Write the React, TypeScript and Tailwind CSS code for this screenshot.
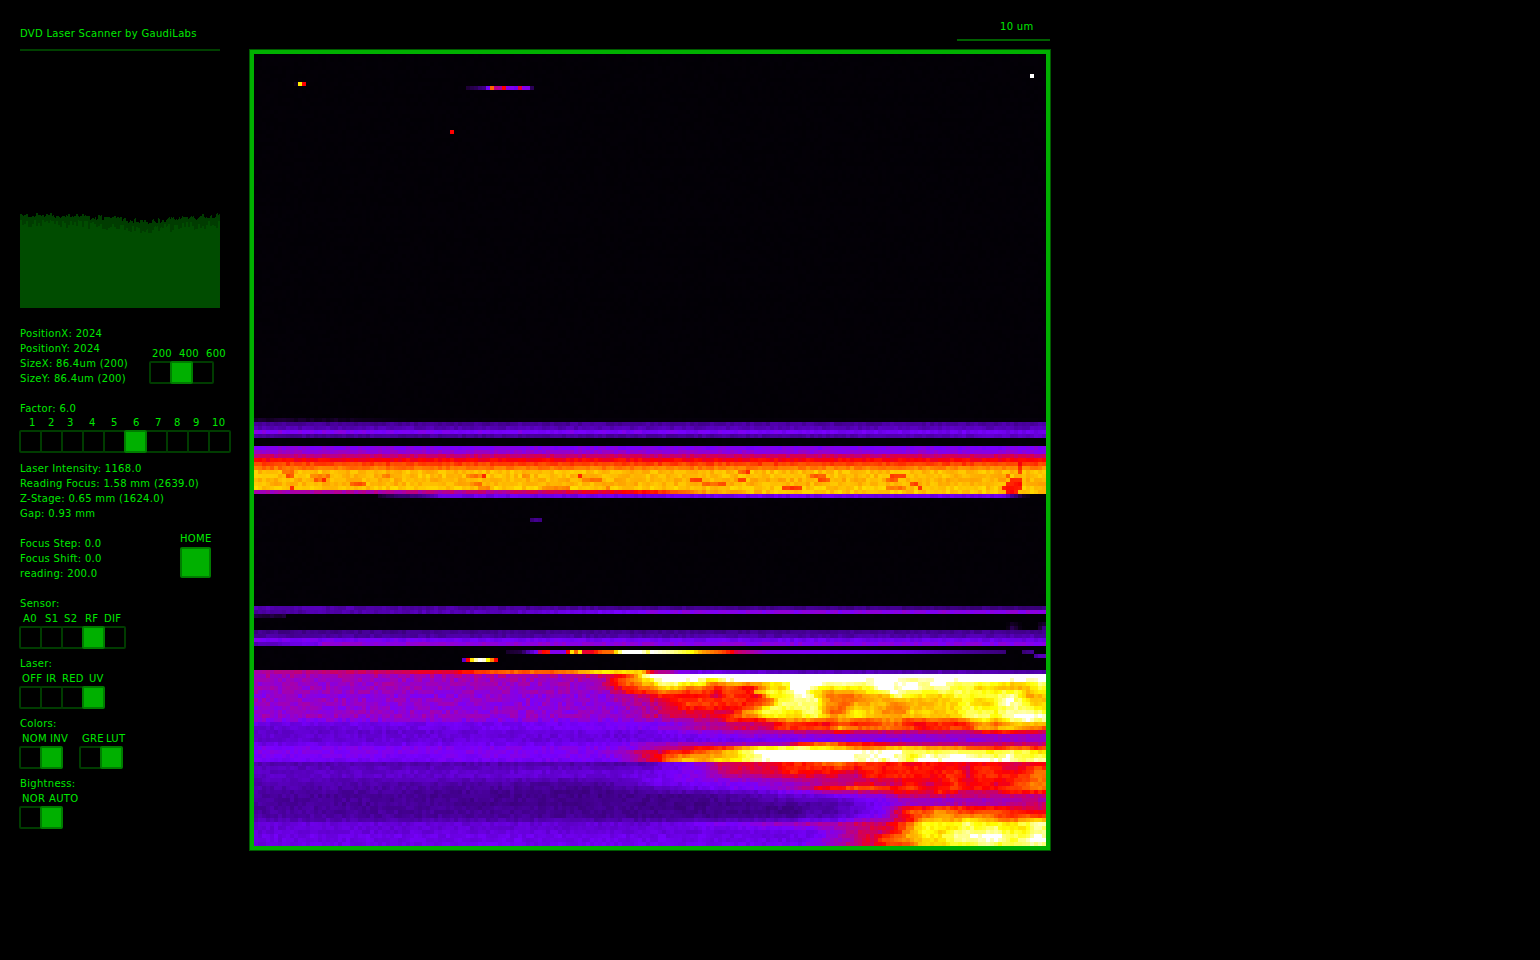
import { useEffect, useRef } from 'react';

// Fire-style LUT of the scanner, value 0..1 -> rgb.
const LUT: [number, number, number, number][] = [
  [0, 2, 0, 5],
  [0.1, 30, 0, 55],
  [0.25, 70, 0, 150],
  [0.4, 120, 0, 255],
  [0.5, 170, 0, 165],
  [0.62, 255, 0, 0],
  [0.75, 255, 130, 0],
  [0.88, 255, 255, 0],
  [1, 255, 255, 255],
];

type Stops = [number, number][];

// Scan rows: image y -> brightness stops along image x. Rows between keys are blended.
const KEYS: [number, Stops][] = [
  [54, [[254, 0.002]]],
  [414, [[254, 0.002]]],
  [418, [[254, 0.08], [350, 0.05], [400, 0.01]]],
  [422, [[254, 0.25], [1046, 0.27]]],
  [426, [[254, 0.28], [1046, 0.29]]],
  [430, [[254, 0.41], [800, 0.38], [1046, 0.36]]],
  [434, [[254, 0.25], [800, 0.27], [1046, 0.33]]],
  [438, [[254, 0.002]]],
  [442, [[254, 0.002]]],
  [446, [[254, 0.42], [1046, 0.41]]],
  [450, [[254, 0.46], [1046, 0.44]]],
  [454, [[254, 0.54], [1046, 0.55]]],
  [458, [[254, 0.62]]],
  [462, [[254, 0.68]]],
  [466, [[254, 0.74], [1046, 0.76]]],
  [470, [[254, 0.81]]],
  [474, [[254, 0.81]]],
  [478, [[254, 0.8]]],
  [482, [[254, 0.81]]],
  [486, [[254, 0.82]]],
  [490, [[254, 0.48], [500, 0.52], [640, 0.62], [700, 0.78], [780, 0.82]]],
  [494, [[254, 0.002], [376, 0.002], [380, 0.12], [420, 0.25], [440, 0.36], [1000, 0.36], [1020, 0.1], [1030, 0.002]]],
  [498, [[254, 0.002]]],
  [602, [[254, 0.002]]],
  [606, [[254, 0.3], [650, 0.25], [1046, 0.22]]],
  [610, [[254, 0.26], [500, 0.3], [600, 0.38], [660, 0.42], [1046, 0.43]]],
  [614, [[254, 0.12], [285, 0.1], [286, 0.002]]],
  [618, [[254, 0.002]]],
  [626, [[254, 0.002], [1005, 0.002], [1010, 0.14], [1020, 0.002], [1036, 0.002], [1040, 0.2]]],
  [630, [[254, 0.24], [1046, 0.25]]],
  [634, [[254, 0.26], [1046, 0.28]]],
  [638, [[254, 0.41], [1046, 0.37]]],
  [642, [[254, 0.3], [315, 0.38], [320, 0.45], [1046, 0.42]]],
  [646, [[254, 0.002]]],
  [666, [[254, 0.002]]],
  [670, [[254, 0.5], [450, 0.58], [490, 0.7], [560, 0.72], [600, 0.85], [640, 0.85], [652, 0.55], [690, 0.38], [800, 0.3], [1046, 0.27]]],
  [674, [[254, 0.45], [560, 0.46], [610, 0.55], [630, 0.68], [645, 0.96], [660, 1], [1046, 1]]],
  [678, [[254, 0.44], [590, 0.45], [620, 0.62], [640, 0.8], [650, 0.92], [665, 1], [690, 1], [700, 0.9], [720, 0.98], [1046, 1]]],
  [684, [[254, 0.44], [590, 0.44], [618, 0.6], [635, 0.68], [650, 0.72], [665, 0.9], [690, 0.85], [700, 0.72], [720, 0.66], [760, 0.66], [775, 0.78], [790, 0.9], [800, 1], [830, 0.92], [880, 0.9], [895, 1], [915, 0.95], [960, 0.88], [990, 0.78], [1020, 0.8], [1046, 0.88]]],
  [692, [[254, 0.43], [600, 0.43], [625, 0.54], [650, 0.6], [690, 0.64], [760, 0.63], [770, 0.86], [810, 0.98], [830, 0.86], [850, 0.74], [880, 0.86], [900, 0.95], [950, 0.86], [980, 0.9], [1000, 0.92], [1020, 0.74], [1046, 0.88]]],
  [700, [[254, 0.44], [600, 0.42], [625, 0.5], [650, 0.56], [700, 0.62], [755, 0.68], [765, 0.9], [810, 0.98], [830, 0.72], [850, 0.76], [900, 0.82], [960, 0.82], [990, 0.96], [1020, 0.88], [1046, 0.85]]],
  [708, [[254, 0.43], [600, 0.42], [650, 0.52], [700, 0.62], [740, 0.62], [760, 0.88], [800, 0.96], [830, 0.68], [850, 0.82], [900, 0.78], [950, 0.88], [1000, 0.9], [1046, 0.92]]],
  [716, [[254, 0.44], [600, 0.42], [650, 0.5], [720, 0.6], [770, 0.85], [830, 0.85], [900, 0.8], [1000, 0.92], [1046, 1]]],
  [720, [[254, 0.36], [650, 0.4], [720, 0.45], [770, 0.62], [830, 0.65], [900, 0.62], [960, 0.66], [990, 0.76], [1046, 0.96]]],
  [724, [[254, 0.34], [650, 0.38], [700, 0.48], [770, 0.6], [830, 0.66], [1000, 0.7], [1046, 0.72]]],
  [727, [[254, 0.33], [650, 0.42], [760, 0.6], [820, 0.72], [830, 0.82], [850, 0.7], [950, 0.65], [1000, 0.85], [1046, 0.7]]],
  [732, [[254, 0.33], [650, 0.34], [750, 0.45], [1046, 0.47]]],
  [738, [[254, 0.33], [650, 0.36], [850, 0.42], [1000, 0.45], [1046, 0.48]]],
  [742, [[254, 0.37], [600, 0.39], [650, 0.48], [780, 0.5], [800, 0.62], [820, 0.72], [900, 0.55], [1046, 0.55]]],
  [746, [[254, 0.4], [620, 0.41], [650, 0.5], [700, 0.62], [750, 0.78], [770, 0.9], [810, 0.9], [850, 0.75], [900, 0.8], [950, 0.8], [1000, 0.7], [1046, 0.7]]],
  [750, [[254, 0.41], [600, 0.41], [625, 0.5], [650, 0.58], [700, 0.72], [750, 0.9], [770, 1], [900, 1], [920, 0.9], [950, 0.95], [1046, 0.9]]],
  [756, [[254, 0.4], [610, 0.41], [650, 0.62], [700, 0.85], [740, 0.9], [770, 1], [890, 1], [900, 0.85], [930, 1], [1000, 1], [1020, 0.93], [1046, 0.95]]],
  [760, [[254, 0.38], [600, 0.38], [650, 0.55], [680, 0.72], [720, 0.88], [790, 1], [890, 0.97], [930, 1], [1046, 1]]],
  [762, [[254, 0.29], [640, 0.28], [680, 0.38], [720, 0.55], [800, 0.62], [830, 0.72], [900, 0.62], [1046, 0.6]]],
  [772, [[254, 0.31], [650, 0.36], [720, 0.5], [800, 0.6], [900, 0.62], [1000, 0.65], [1046, 0.72]]],
  [780, [[254, 0.31], [600, 0.28], [650, 0.4], [720, 0.42], [800, 0.5], [900, 0.58], [1000, 0.65], [1046, 0.72]]],
  [786, [[254, 0.28], [600, 0.24], [650, 0.3], [780, 0.45], [850, 0.7], [950, 0.62], [1046, 0.7]]],
  [792, [[254, 0.27], [600, 0.23], [700, 0.25], [870, 0.45], [900, 0.6], [1000, 0.55], [1046, 0.55]]],
  [800, [[254, 0.26], [600, 0.23], [700, 0.23], [850, 0.3], [880, 0.42], [950, 0.42], [1046, 0.5]]],
  [808, [[254, 0.26], [600, 0.24], [800, 0.22], [880, 0.42], [900, 0.62], [960, 0.72], [1046, 0.65]]],
  [816, [[254, 0.28], [700, 0.25], [800, 0.26], [880, 0.45], [920, 0.72], [960, 0.8], [1046, 0.7]]],
  [822, [[254, 0.34], [650, 0.33], [880, 0.55], [920, 0.85], [960, 0.88], [1046, 0.9]]],
  [832, [[254, 0.36], [650, 0.36], [800, 0.35], [880, 0.62], [915, 0.82], [970, 0.95], [1046, 0.94]]],
  [842, [[254, 0.36], [650, 0.38], [800, 0.38], [880, 0.6], [920, 0.72], [960, 0.92], [1046, 0.96]]],
];

// Single-pixel scan lines, exact cells: y, first x, values.
const LINES: [number, number, number[]][] = [
  [82, 294, [0.05, 0.86, 0.62]],
  [86, 466, [0.1, 0.13, 0.15, 0.2, 0.22, 0.4, 0.72, 0.52, 0.5, 0.62, 0.42, 0.42, 0.38, 0.58, 0.42, 0.42, 0.15]],
  [130, 450, [0.62]],
  [74, 1030, [1]],
  [518, 530, [0.2, 0.24, 0.22]],
  [658, 462, [0.33, 0.62, 0.85, 0.96, 1, 0.98, 0.88, 0.75, 0.62]],
  [654, 1034, [0.26, 0.3, 0.3]],
  [650, 1022, [0.2, 0.22, 0.24]],
];

// Darker runs in the bright bands: x0, x1, y, value.
const SPOTS: [number, number, number, number][] = [
  [282, 294, 470, 0.73], [286, 294, 474, 0.71], [310, 330, 474, 0.75], [314, 326, 478, 0.72], [322, 326, 478, 0.66],
  [350, 366, 482, 0.72], [290, 294, 486, 0.66], [382, 390, 474, 0.75], [470, 480, 482, 0.75], [478, 490, 486, 0.74],
  [520, 530, 474, 0.75], [540, 560, 486, 0.75], [580, 590, 478, 0.75],
  [466, 482, 474, 0.74], [480, 486, 474, 0.66], [578, 582, 474, 0.68], [590, 600, 478, 0.72], [606, 610, 486, 0.74],
  [560, 570, 486, 0.74], [650, 662, 476, 0.69], [690, 700, 478, 0.67], [700, 726, 482, 0.72], [735, 745, 470, 0.72],
  [745, 750, 470, 0.66], [735, 746, 478, 0.7], [780, 790, 486, 0.7], [790, 800, 486, 0.66], [810, 826, 474, 0.7],
  [815, 830, 478, 0.7], [885, 895, 478, 0.72], [890, 905, 474, 0.68], [910, 918, 482, 0.7], [884, 905, 486, 0.74],
  [915, 922, 486, 0.66], [1004, 1010, 474, 0.72], [1008, 1020, 478, 0.65], [1005, 1020, 482, 0.65], [1002, 1020, 486, 0.65],
  [1005, 1018, 490, 0.63], [1016, 1020, 462, 0.63], [1016, 1020, 466, 0.66], [1016, 1020, 470, 0.66], [620, 650, 752, 0.56],
];

function rnd(a: number, b: number) {
  const s = Math.sin(a * 127.1 + b * 311.7) * 43758.5453;
  return s - Math.floor(s);
}

function smooth(x: number, y: number) {
  const xi = Math.floor(x);
  const yi = Math.floor(y);
  const fx = x - xi;
  const fy = y - yi;
  const top = rnd(xi, yi) * (1 - fx) + rnd(xi + 1, yi) * fx;
  const bot = rnd(xi, yi + 1) * (1 - fx) + rnd(xi + 1, yi + 1) * fx;
  return top * (1 - fy) + bot * fy;
}

function along(stops: Stops, x: number) {
  if (x <= stops[0][0]) return stops[0][1];
  for (let i = 1; i < stops.length; i++) {
    if (x <= stops[i][0]) {
      const [x0, v0] = stops[i - 1];
      const [x1, v1] = stops[i];
      return v0 + ((v1 - v0) * (x - x0)) / (x1 - x0);
    }
  }
  return stops[stops.length - 1][1];
}

function sample(x: number, y: number) {
  for (let i = KEYS.length - 1; i >= 0; i--) {
    if (y >= KEYS[i][0]) {
      const a = along(KEYS[i][1], x);
      const next = KEYS[i + 1];
      if (!next) return a;
      const t = (y - KEYS[i][0]) / (next[0] - KEYS[i][0]);
      return a + (along(next[1], x) - a) * t;
    }
  }
  return 0;
}

function toRgb(v: number) {
  const c = Math.min(1, Math.max(0, v));
  for (let i = 1; i < LUT.length; i++) {
    if (c <= LUT[i][0]) {
      const a = LUT[i - 1];
      const b = LUT[i];
      const t = (c - a[0]) / (b[0] - a[0]);
      return [a[1] + (b[1] - a[1]) * t, a[2] + (b[2] - a[2]) * t, a[3] + (b[3] - a[3]) * t];
    }
  }
  return [255, 255, 255];
}

function drawScan(ctx: CanvasRenderingContext2D) {
  const img = ctx.createImageData(198, 198);
  const put = (cx: number, cy: number, v: number) => {
    const rgb = toRgb(v);
    const o = (cy * 198 + cx) * 4;
    img.data[o] = rgb[0];
    img.data[o + 1] = rgb[1];
    img.data[o + 2] = rgb[2];
    img.data[o + 3] = 255;
  };
  for (let cy = 0; cy < 198; cy++) {
    const py = 54 + cy * 4;
    const rowJit = rnd(cy, 9) - 0.5;
    for (let cx = 0; cx < 198; cx++) {
      const px = 254 + cx * 4;
      const hot = py >= 678;
      const warp = hot ? (smooth(px / 26, py / 10) - 0.5) * 34 : 0;
      let v = sample(px + warp, py);
      for (const [x0, x1, y, sv] of SPOTS) {
        if (py === y && px >= x0 && px < x1) v = sv;
      }
      // blotches in the bright clouds, plain grain everywhere else
      if (hot && v > 0.58) v += (smooth(px / 14, py / 9) - 0.5) * 0.14;
      if (py >= 674 && py < 720 && v < 0.5) v += 0.02;
      const amp = v < 0.05 ? 0.004 : py >= 674 && py < 720 && v < 0.55 ? 0.08 : 0.05;
      v += (rnd(cx, cy) - 0.5) * amp + rowJit * amp * 0.35;
      if (v >= 0.97) v = 1;
      put(cx, cy, v);
    }
  }
  // scan line at y=650 runs across most of the field
  const line: Stops = [
    [506, 0.08], [520, 0.12], [524, 0.25], [532, 0.35], [536, 0.42], [538, 0.55], [540, 0.62], [546, 0.64], [550, 0.42],
    [562, 0.42], [566, 0.62], [570, 0.85], [574, 0.72], [578, 0.85], [582, 0.58], [590, 0.6], [594, 0.65], [600, 0.72],
    [610, 0.73], [616, 0.9], [622, 1], [640, 1], [646, 0.92], [650, 1], [670, 0.95], [690, 0.88], [700, 0.78], [720, 0.7],
    [730, 0.62], [735, 0.55], [750, 0.5], [765, 0.42], [900, 0.38], [950, 0.28], [1004, 0.2],
  ];
  for (let px = 506; px < 1006; px += 4) {
    put((px - 254) / 4, (650 - 54) / 4, along(line, px));
  }
  for (const [y, x, vals] of LINES) {
    vals.forEach((v, i) => put((x - 254) / 4 + i, (y - 54) / 4, v));
  }
  ctx.putImageData(img, 0, 0);
}

function ScanView() {
  const ref = useRef<HTMLCanvasElement>(null);
  useEffect(() => {
    const ctx = ref.current?.getContext('2d');
    if (ctx) drawScan(ctx);
  }, []);
  return (
    <div className="w-[800px] h-[800px] border-4 border-[#00b000] ring-1 ring-[#005a00] bg-[#020005]">
      <canvas ref={ref} width={198} height={198} className="block w-[792px] h-[792px] [image-rendering:pixelated]" />
    </div>
  );
}

function Histogram() {
  const bars = Array.from({ length: 200 }, (_, x) => {
    const d = Math.abs(x - 125) / 125;
    const base = 6 + 8 * (1 - d) * (1 - d);
    const clump = rnd(Math.floor(x / 2), 5);
    const peak = base - clump * 5 - rnd(x, 3) * 2;
    const low = base + rnd(Math.floor(x / 2), 7) * 9;
    return { x, peak: Math.max(1, peak), low };
  });
  return (
    <svg width="200" height="96" viewBox="0 0 200 96" shapeRendering="crispEdges" className="block mt-[161px]">
      {bars.map((b) => (
        <g key={b.x}>
          <rect x={b.x} y={b.peak} width="1" height={b.low - b.peak} fill="#003c00" />
          <rect x={b.x} y={b.low} width="1" height={96 - b.low} fill="#004c00" />
        </g>
      ))}
    </svg>
  );
}

function Cells({ count, active }: { count: number; active: number }) {
  return (
    <div className="flex -ml-px w-fit">
      {Array.from({ length: count }, (_, i) => (
        <div
          key={i}
          className={`w-[23px] h-[23px] -mr-[2px] last:mr-0 border-2 rounded-[2px] ${
            i === active ? 'bg-[#00b000] border-[#007c00] relative' : 'border-[#003c00]'
          }`}
        />
      ))}
    </div>
  );
}

function Labels({ items }: { items: [string, string][] }) {
  return (
    <div className="flex h-[15px] leading-[15px]">
      {items.map(([t, c]) => (
        <span key={t} className={c}>
          {t}
        </span>
      ))}
    </div>
  );
}

function Lines({ rows }: { rows: string[] }) {
  return (
    <div>
      {rows.map((r) => (
        <div key={r} className="h-[15px] leading-[15px] whitespace-pre">
          {r}
        </div>
      ))}
    </div>
  );
}

export default function App() {
  return (
    <div className="flex h-[960px] bg-black text-[#00e800] text-[10px] tracking-[0.3px] font-['DejaVu_Sans',sans-serif]">
      <div className="w-[250px] shrink-0 pl-[20px] flex flex-col">
        <div className="pt-[26px] h-[49px] leading-[15px]">DVD Laser Scanner by GaudiLabs</div>
        <div className="w-[200px] h-[2px] bg-[#004000]" />
        <Histogram />

        <div className="flex mt-[18px] h-[75px]">
          <div className="w-[130px]">
            <Lines rows={['PositionX: 2024', 'PositionY: 2024', 'SizeX: 86.4um (200)', 'SizeY: 86.4um (200)']} />
          </div>
          <div className="pt-[20px]">
            <Labels items={[['200', 'ml-[2px] w-[27px]'], ['400', 'w-[27px]'], ['600', '']]} />
            <Cells count={3} active={1} />
          </div>
        </div>

        <div className="h-[14px] leading-[15px]">Factor: 6.0</div>
        <Labels
          items={[
            ['1', 'ml-[9px] w-[19px]'], ['2', 'w-[19px]'], ['3', 'w-[22px]'], ['4', 'w-[22px]'], ['5', 'w-[22px]'],
            ['6', 'w-[22px]'], ['7', 'w-[19px]'], ['8', 'w-[19px]'], ['9', 'w-[19px]'], ['10', ''],
          ]}
        />
        <Cells count={10} active={5} />

        <div className="mt-[8px]">
          <Lines rows={['Laser Intensity: 1168.0', 'Reading Focus: 1.58 mm (2639.0)', 'Z-Stage: 0.65 mm (1624.0)', 'Gap: 0.93 mm']} />
        </div>

        <div className="flex mt-[10px] h-[65px]">
          <div className="w-[160px] pt-[5px]">
            <Lines rows={['Focus Step: 0.0', 'Focus Shift: 0.0', 'reading: 200.0']} />
          </div>
          <div className="flex flex-col items-start">
            <div className="h-[16px] leading-[15px]">HOME</div>
            <div className="w-[31px] h-[31px] border-2 border-[#007c00] bg-[#00b000] rounded-[2px]" />
          </div>
        </div>

        <div className="h-[15px] leading-[15px]">Sensor:</div>
        <Labels items={[['A0', 'ml-[3px] w-[22px]'], ['S1', 'w-[19px]'], ['S2', 'w-[21px]'], ['RF', 'w-[19px]'], ['DIF', '']]} />
        <Cells count={5} active={3} />

        <div className="mt-[7px] h-[15px] leading-[15px]">Laser:</div>
        <Labels items={[['OFF', 'ml-[2px] w-[24px]'], ['IR', 'w-[16px]'], ['RED', 'w-[27px]'], ['UV', '']]} />
        <Cells count={4} active={3} />

        <div className="mt-[7px] h-[15px] leading-[15px]">Colors:</div>
        <Labels items={[['NOM', 'ml-[2px] w-[28px]'], ['INV', 'w-[32px]'], ['GRE', 'w-[24px]'], ['LUT', '']]} />
        <div className="flex gap-[17px]">
          <Cells count={2} active={1} />
          <Cells count={2} active={1} />
        </div>

        <div className="mt-[7px] h-[15px] leading-[15px]">Bightness:</div>
        <Labels items={[['NOR', 'ml-[2px] w-[27px]'], ['AUTO', '']]} />
        <Cells count={2} active={1} />
      </div>

      <div className="w-[800px] shrink-0 flex flex-col items-end">
        <div className="pt-[19px] pl-[43px] w-[93px] h-[39px] leading-[15px]">10 um</div>
        <div className="w-[93px] h-[2px] bg-[#006000] mb-[9px]" />
        <ScanView />
      </div>
    </div>
  );
}
